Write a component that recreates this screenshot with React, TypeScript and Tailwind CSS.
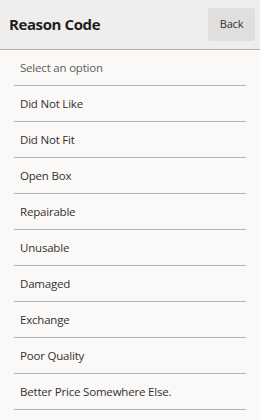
const options = [
  "Did Not Like",
  "Did Not Fit",
  "Open Box",
  "Repairable",
  "Unusable",
  "Damaged",
  "Exchange",
  "Poor Quality",
  "Better Price Somewhere Else.",
];

export default function App() {
  return (
    <div
      className="flex flex-col h-[420px] w-[260px] bg-[#faf9f8] text-[#323130]"
      style={{ fontFamily: '"Segoe UI", "Open Sans", "Noto Sans", sans-serif' }}
    >
      <header className="flex items-center justify-between h-[50px] pl-[9px] pr-[5px] bg-[#efeeed] border-b border-[#b3b0ad] shrink-0">
        <span className="text-[15px] font-bold tracking-[-0.4px] text-[#201f1e]">Reason Code</span>
        <button className="w-[47px] h-[33px] mb-[1px] rounded-[3px] bg-[#e1dfdd] text-[11px] tracking-[-0.2px] text-[#323130]">
          Back
        </button>
      </header>

      <ul className="flex flex-col px-[14px]">
        <li className="flex items-center h-[36px] px-[6px] border-b border-[#b8b6b4] text-[11.5px] tracking-[-0.2px] text-[#605e5c]">
          Select an option
        </li>
        {options.map((o) => (
          <li
            key={o}
            className="flex items-center h-[36px] px-[6px] border-b border-[#b8b6b4] text-[11.5px] tracking-[-0.2px]"
          >
            {o}
          </li>
        ))}
      </ul>
    </div>
  );
}
